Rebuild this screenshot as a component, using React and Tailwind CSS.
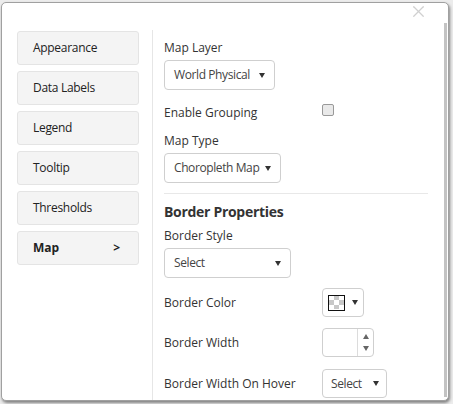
import { X } from "lucide-react"

const navItems = ["Appearance", "Data Labels", "Legend", "Tooltip", "Thresholds"]

const font = { fontFamily: "'Open Sans', 'Noto Sans', sans-serif" }

// Small filled caret used by the select-like controls
const Caret = ({ up = false, className = "" }) => (
  <svg viewBox="0 0 6 5" className={`w-[6px] h-[5px] shrink-0 ${className}`} fill="currentColor">
    <path d={up ? "M0 5 L6 5 L3 0 Z" : "M0 0 L6 0 L3 5 Z"} />
  </svg>
)

// Dropdown that looks like a native select
const SelectBox = ({ value, width }) => (
  <div className={`flex items-center justify-between h-[30px] ${width} pl-[9px] pr-[9px] border border-[#cfcfcf] rounded-[4px] bg-white text-[12px] text-[#444] whitespace-nowrap`}>
    <span className="tracking-[-0.4px]">{value}</span>
    <Caret className="text-[#333]" />
  </div>
)

const Label = ({ children, className = "" }) => (
  <div className={`text-[12px] leading-[16px] text-[#333] whitespace-nowrap ${className}`}>{children}</div>
)

const Row = ({ label, children, className = "" }) => (
  <div className={`flex items-center ${className}`}>
    <Label className="w-[158px]">{label}</Label>
    {children}
  </div>
)

export default function App() {
  return (
    <div className="w-[453px] h-[404px] bg-[#ececec] pl-[1px] pt-[2px] overflow-hidden" style={font}>
      <div className="relative w-[448px] h-[399px] bg-white border border-[#a0a0a0] rounded-[5px] shadow-[1px_2px_3px_rgba(0,0,0,0.45)] flex pl-[15px] pt-[28px]">
        {/* close button */}
        <X className="absolute right-[20px] top-[-1px] w-[19px] h-[19px] text-[#d0d0d0]" strokeWidth={1.6} />
        {/* scrollbar */}
        <div className="absolute right-[1px] top-[20px] w-[3px] h-[374px] bg-[#c3c3c3]" />

        {/* Sidebar */}
        <div className="flex flex-col gap-[6px] w-[122px]">
          {navItems.map((item) => (
            <div
              key={item}
              className="h-[34px] flex items-center pl-[15px] bg-[#f4f4f4] border border-[#e4e4e4] rounded-[3px] text-[12px] text-[#222] tracking-[-0.3px]"
            >
              {item}
            </div>
          ))}
          <div className="h-[34px] flex items-center justify-between pl-[15px] pr-[18px] bg-[#f4f4f4] border border-[#e4e4e4] rounded-[3px] text-[12px] font-bold text-[#222]">
            <span>Map</span>
            <span>&gt;</span>
          </div>
        </div>

        {/* Content */}
        <div className="ml-[13px] mt-[-1px] border-l border-[#e6e6e6] pl-[11px] w-[277px] flex flex-col">
          <Label className="mt-[10px]">Map Layer</Label>
          <div className="mt-[4px]">
            <SelectBox value="World Physical" width="w-[111px]" />
          </div>

          <div className="flex items-start mt-[14px]">
            <Label className="w-[158px] mt-[1px]">Enable Grouping</Label>
            <div className="w-[12px] h-[12px] border border-[#999] rounded-[2px] bg-[#e9e9e9]" />
          </div>

          <Label className="mt-[12px]">Map Type</Label>
          <div className="mt-[4px]">
            <SelectBox value="Choropleth Map" width="w-[117px]" />
          </div>

          <div className="mt-[10px] h-px bg-[#e8e8e8] w-[264px]" />

          <div className="mt-[8px] text-[14px] leading-[20px] font-bold text-[#333] tracking-[-0.3px]">Border Properties</div>
          <Label className="mt-[6px]">Border Style</Label>
          <div className="mt-[4px]">
            <SelectBox value="Select" width="w-[127px]" />
          </div>

          <Row label="Border Color" className="mt-[10px]">
            <div className="flex items-center h-[29px] w-[42px] border border-[#cfcfcf] rounded-[4px] pl-[5px] gap-[7px]">
              <div className="w-[17px] h-[16px] border border-[#111] grid grid-cols-3 grid-rows-3">
                <div className="bg-white" />
                <div className="bg-[#c8c8c8]" />
                <div className="bg-white" />
                <div className="bg-[#c8c8c8]" />
                <div className="bg-white" />
                <div className="bg-[#c8c8c8]" />
                <div className="bg-white" />
                <div className="bg-[#c8c8c8]" />
                <div className="bg-white" />
              </div>
              <Caret className="text-[#333] w-[5px] h-[4px]" />
            </div>
          </Row>

          <Row label="Border Width" className="mt-[11px]">
            <div className="flex h-[29px] w-[52px] border border-[#cfcfcf] rounded-[4px]">
              <div className="flex-1" />
              <div className="w-[16px] border-l border-[#dcdcdc] flex flex-col items-center justify-center gap-[7px] text-[#666]">
                <Caret up className="w-[6px] h-[4px]" />
                <Caret className="w-[6px] h-[4px]" />
              </div>
            </div>
          </Row>

          <Row label="Border Width On Hover" className="mt-[12px]">
            <div className="flex items-center justify-between h-[29px] w-[65px] pl-[8px] pr-[7px] border border-[#cfcfcf] rounded-[4px] text-[12px] text-[#444]">
              <span className="tracking-[-0.4px]">Select</span>
              <Caret className="text-[#333]" />
            </div>
          </Row>
        </div>
      </div>
    </div>
  )
}
